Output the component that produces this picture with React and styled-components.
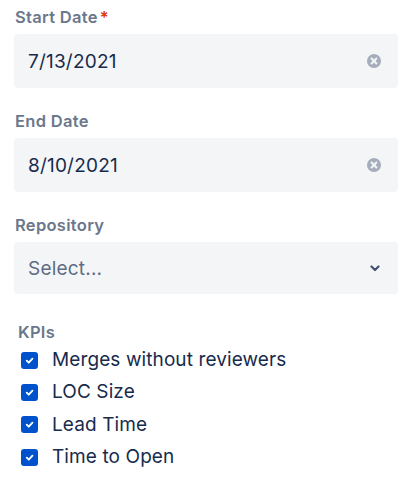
import React, { useState } from "react";
import styled, { createGlobalStyle } from "styled-components";

const GlobalStyle = createGlobalStyle`
  body {
    margin: 0;
    background: #ffffff;
    font-family: Inter, "Noto Sans", "Liberation Sans", sans-serif;
    color: #172b4d;
  }
`;

const Form = styled.div`
  width: 384px;
  padding: 7px 14px 0 14px;
  display: flex;
  flex-direction: column;
`;

const Field = styled.div`
  display: flex;
  flex-direction: column;
  margin-bottom: ${(p) => p.$gap || 23}px;
`;

const Label = styled.label`
  font-size: 16.5px;
  font-weight: 600;
  letter-spacing: 0.3px;
  color: #6b778c;
  line-height: 20px;
  padding-left: ${(p) => (p.$indent ? 4 : 1)}px;
  margin-bottom: ${(p) => (p.$tight ? 5 : 7)}px;
`;

const Required = styled.span`
  color: #de350b;
  margin-left: 2px;
`;

const Box = styled.div`
  height: ${(p) => p.$h || 54}px;
  box-sizing: border-box;
  border-radius: 4px;
  background: #f4f5f7;
  display: flex;
  align-items: center;
  justify-content: space-between;
  padding: 0 16px 0 14px;
  font-size: 19px;
  letter-spacing: 0.2px;
  color: ${(p) => (p.$placeholder ? "#5e6c84" : "#172b4d")};
`;

const Clear = styled.span`
  display: flex;
  width: 16px;
  height: 16px;
`;

const Checks = styled.div`
  display: flex;
  flex-direction: column;
  gap: 6.4px;
  padding-left: 7px;
`;

const CheckRow = styled.label`
  display: flex;
  align-items: center;
  gap: 14px;
  font-size: 19px;
  letter-spacing: 0.1px;
  line-height: 26px;
  color: #172b4d;
  cursor: pointer;
`;

const Tick = styled.span`
  width: 17px;
  height: 17px;
  border-radius: 3px;
  background: ${(p) => (p.$on ? "#0052cc" : "#fafbfc")};
  border: ${(p) => (p.$on ? "none" : "2px solid #dfe1e6")};
  box-sizing: border-box;
  display: flex;
  align-items: center;
  justify-content: center;
`;

const ClearIcon = () => (
  <Clear>
    <svg width="16" height="16" viewBox="0 0 16 16">
      <circle cx="8" cy="8" r="7" fill="#a5adba" />
      <path d="M5.6 5.6l4.8 4.8M10.4 5.6l-4.8 4.8" stroke="#f4f5f7" strokeWidth="2.1" strokeLinecap="round" />
    </svg>
  </Clear>
);

const Chevron = () => (
  <svg width="14" height="14" viewBox="0 0 14 14">
    <path d="M3.5 5.5L7 9l3.5-3.5" fill="none" stroke="#42526e" strokeWidth="2.2" strokeLinecap="round" strokeLinejoin="round" />
  </svg>
);

const kpiList = ["Merges without reviewers", "LOC Size", "Lead Time", "Time to Open"];

export default function App() {
  const [kpis, setKpis] = useState(kpiList.map(() => true));

  return (
    <>
      <GlobalStyle />
      <Form>
        <Field>
          <Label>
            Start Date<Required>*</Required>
          </Label>
          <Box>
            7/13/2021
            <ClearIcon />
          </Box>
        </Field>
        <Field>
          <Label>End Date</Label>
          <Box>
            8/10/2021
            <ClearIcon />
          </Box>
        </Field>
        <Field $gap={28}>
          <Label>Repository</Label>
          <Box $placeholder $h={52}>
            Select...
            <Chevron />
          </Box>
        </Field>
        <Label $indent $tight>KPIs</Label>
        <Checks>
          {kpiList.map((k, i) => (
            <CheckRow
              key={k}
              onClick={() => setKpis(kpis.map((v, j) => (j === i ? !v : v)))}
            >
              <Tick $on={kpis[i]}>
                {kpis[i] && (
                  <svg width="11" height="11" viewBox="0 0 12 12">
                    <path d="M3 6.2l2.2 2.2L9.2 4" fill="none" stroke="#fff" strokeWidth="2" strokeLinecap="round" strokeLinejoin="round" />
                  </svg>
                )}
              </Tick>
              {k}
            </CheckRow>
          ))}
        </Checks>
      </Form>
    </>
  );
}
